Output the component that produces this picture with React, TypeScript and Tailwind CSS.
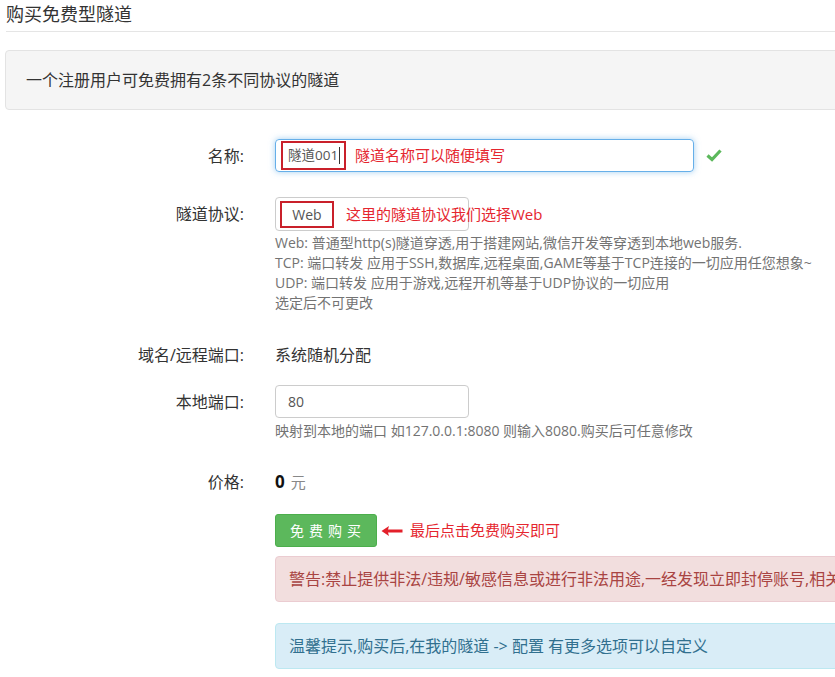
import React from "react";

const font = { fontFamily: "'Open Sans','Noto Sans CJK SC',sans-serif" };

function Label({ children }: { children: React.ReactNode }) {
  return (
    <div className="w-[244px] shrink-0 text-right text-[16px] leading-[20px] text-[#333]">
      {children}
    </div>
  );
}

export default function App() {
  return (
    <div className="w-[835px] h-[677px] overflow-hidden bg-white" style={font}>
      <div className="w-[900px]">
        {/* title */}
        <div className="ml-[6px] h-[32px] border-b border-[#e5e5e5] text-[18px] leading-[28px] text-[#333]">
          购买免费型隧道
        </div>
        {/* well */}
        <div className="ml-[5px] mt-[18px] flex h-[60px] items-center rounded-[4px] border border-[#e3e3e3] bg-[#f5f5f5] pl-[20px] text-[16px] text-[#333]">
          一个注册用户可免费拥有2条不同协议的隧道
        </div>

        {/* name row */}
        <div className="mt-[29px] flex h-[33px] items-center">
          <Label>名称:</Label>
          <div className="ml-[31px] flex h-[33px] w-[419px] items-center rounded-[4px] border border-[#66afe9] pl-[5px] shadow-[0_0_6px_rgba(102,175,233,0.6)]">
            <div className="flex h-[29px] w-[65px] items-center border-2 border-[#c9202a] pl-[5px] text-[13.5px] text-[#555]">
              隧道001<span className="ml-[1px] h-[17px] w-px bg-[#333]" />
            </div>
            <span className="ml-[9px] text-[15px] text-[#e5262f]">隧道名称可以随便填写</span>
          </div>
          <svg className="ml-[12px]" width="16" height="13" viewBox="0 0 16 13">
            <path d="M1.5 6.5 L6 10.5 L14.5 1.5" fill="none" stroke="#5cb85c" strokeWidth="3.2" strokeLinejoin="miter" />
          </svg>
        </div>

        {/* protocol row */}
        <div className="mt-[25px] flex h-[34px] items-center">
          <Label>隧道协议:</Label>
          <div className="ml-[31px] flex h-[34px] w-[194px] items-center whitespace-nowrap rounded-[4px] border border-[#ccc] pl-[4px]">
            <div className="flex h-[27px] w-[54px] shrink-0 items-center justify-center border-2 border-[#c9202a] text-[14px] text-[#555]">
              Web
            </div>
            <span className="ml-[12px] text-[15px] text-[#e5262f]">这里的隧道协议我们选择Web</span>
          </div>
        </div>
        <div className="ml-[275px] mt-[2px] whitespace-nowrap text-[14px] leading-[20px] text-[#737373]">
          <div>Web: 普通型http(s)隧道穿透,用于搭建网站,微信开发等穿透到本地web服务.</div>
          <div>TCP: 端口转发 应用于SSH,数据库,远程桌面,GAME等基于TCP连接的一切应用任您想象~</div>
          <div>UDP: 端口转发 应用于游戏,远程开机等基于UDP协议的一切应用</div>
          <div>选定后不可更改</div>
        </div>

        {/* domain row */}
        <div className="mt-[32px] flex h-[20px] items-center">
          <Label>域名/远程端口:</Label>
          <div className="ml-[31px] text-[16px] leading-[20px] text-[#333]">系统随机分配</div>
        </div>

        {/* local port */}
        <div className="mt-[20px] flex h-[33px] items-center">
          <Label>本地端口:</Label>
          <div className="ml-[31px] flex h-[33px] w-[194px] items-center rounded-[4px] border border-[#ccc] pl-[12px] text-[14px] text-[#555]">
            80
          </div>
        </div>
        <div className="ml-[275px] mt-[3px] text-[14px] leading-[20px] text-[#737373]">
          映射到本地的端口 如127.0.0.1:8080 则输入8080.购买后可任意修改
        </div>

        {/* price */}
        <div className="mt-[31px] flex h-[20px] items-center">
          <Label>价格:</Label>
          <div className="ml-[31px] flex items-baseline leading-[20px]">
            <span className="text-[17px] font-bold text-[#111]">0</span>
            <span className="ml-[6px] text-[15px] text-[#888]">元</span>
          </div>
        </div>

        {/* button */}
        <div className="ml-[275px] mt-[22px] flex h-[33px] items-center">
          <div className="flex h-[33px] w-[102px] items-center justify-center rounded-[3px] border border-[#4cae4c] bg-[#5cb85c] pl-[4px] text-[14px] tracking-[5px] text-white">
            免费购买
          </div>
          <svg className="ml-[4px]" width="22" height="12" viewBox="0 0 22 12">
            <path d="M0.5 6 L8 1 L7 4.6 L21.5 4.6 L21.5 7.4 L7 7.4 L8 11 Z" fill="#e3202a" />
          </svg>
          <span className="ml-[7px] text-[15px] text-[#e5262f]">最后点击免费购买即可</span>
        </div>

        {/* alerts */}
        <div className="ml-[275px] mt-[9px] flex h-[46px] w-[600px] items-center whitespace-nowrap rounded-[4px] border border-[#ebccd1] bg-[#f2dede] pl-[13px] text-[16px] text-[#a94442]">
          警告:禁止提供非法/违规/敏感信息或进行非法用途,一经发现立即封停账号,相关责任自负
        </div>
        <div className="ml-[275px] mt-[21px] flex h-[46px] w-[600px] items-center whitespace-nowrap rounded-[4px] border border-[#bce8f1] bg-[#d9edf7] pl-[13px] text-[16px] text-[#31708f]">
          温馨提示,购买后,在我的隧道 -&gt; 配置 有更多选项可以自定义
        </div>
      </div>
    </div>
  );
}
